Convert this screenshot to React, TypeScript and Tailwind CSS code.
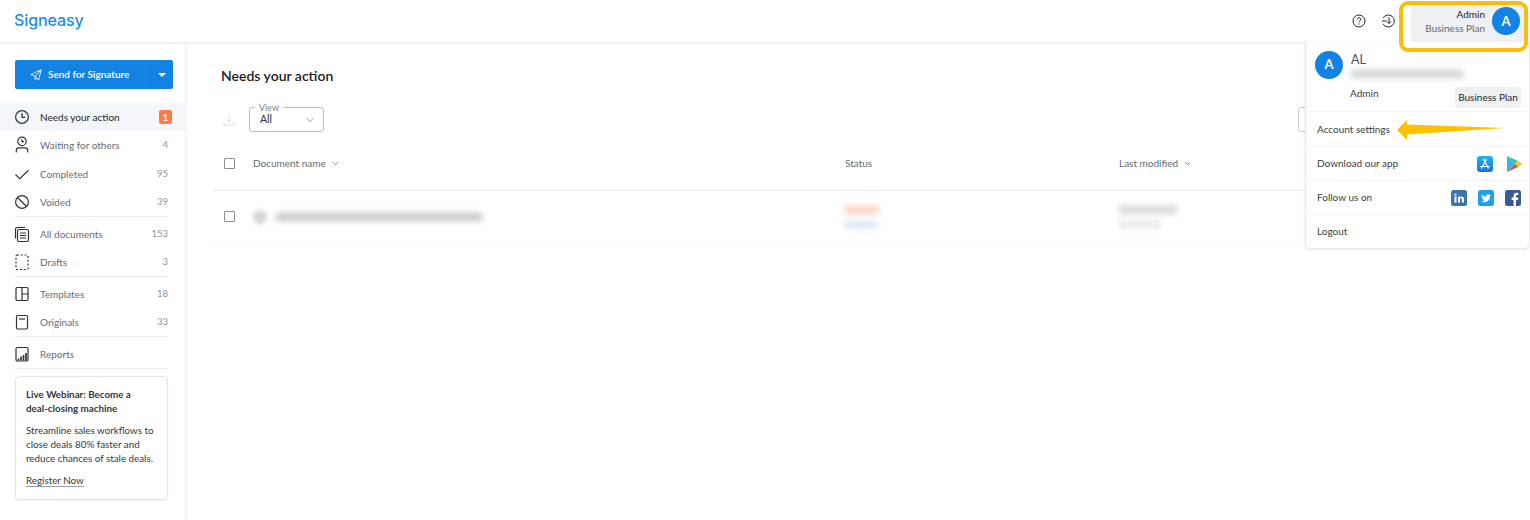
import { ChevronDown, Download } from "lucide-react";
import type { ReactNode } from "react";

const stroke = { fill: "none", stroke: "#2f3437", strokeWidth: 1.2 };

const icons: Record<string, ReactNode> = {
  clock: (
    <>
      <circle cx="10" cy="10" r="6.4" {...stroke} />
      <path d="M10 6v4.400h3.400" {...stroke} />
    </>
  ),
  waiting: (
    <>
      <circle cx="10" cy="6.400" r="4.200" {...stroke} />
      <path d="M10 4.300v2.400h2M4.300 17.500v-2.200c0-1.500 1.100-2.500 2.500-2.500h6.400c1.400 0 2.500 1 2.500 2.500v2.200" {...stroke} />
    </>
  ),
  check: <path d="M3.500 10.500l4.200 4.200 8.800-8.400" {...stroke} />,
  voided: (
    <>
      <circle cx="10" cy="10" r="6.400" {...stroke} />
      <path d="M5.500 5.500l9 9" {...stroke} />
    </>
  ),
  all: (
    <>
      <path d="M3.500 14.500V5.200c0-1 .7-1.700 1.700-1.700H13" {...stroke} />
      <rect x="5.500" y="5.500" width="11" height="12" rx="1.500" {...stroke} />
      <path d="M8 9h6M8 11.500h6M8 14h6" {...stroke} />
    </>
  ),
  drafts: <rect x="4" y="3" width="12" height="14.500" rx="1" {...stroke} strokeDasharray="2 1.800" />,
  templates: (
    <>
      <rect x="4" y="3.500" width="12" height="13" rx="1.200" {...stroke} />
      <path d="M10 3.500v13M10 10h6" {...stroke} />
    </>
  ),
  originals: (
    <>
      <rect x="4.500" y="3.500" width="11" height="13.500" rx="1.200" {...stroke} />
      <path d="M7 7h6" {...stroke} />
    </>
  ),
  reports: (
    <>
      <rect x="4" y="3.500" width="12" height="13.500" rx="1.200" {...stroke} />
      <path d="M6.500 16.500v-2M9 16.500v-4M11.500 16.500v-5.500M14 16.500V9" {...stroke} strokeWidth={1.700} />
    </>
  ),
};

function NavRow({ icon, label, count, active }: { icon: string; label: string; count?: number; active?: boolean }) {
  return (
    <div className={`flex h-[28px] items-center pl-[12px] pr-[17px] text-[10px] ${active ? "bg-[#f3f6fb] text-[#22272b]" : "text-[#666d73]"}`}>
      <svg width="20" height="20" viewBox="0 0 20 20" className="shrink-0">
        {icons[icon]}
      </svg>
      <span className="ml-[8px] flex-1">{label}</span>
      {active ? (
        <span className="mr-[-4px] flex h-[14px] w-[13px] items-center justify-center rounded-[2px] bg-[#ff7a45] text-[10px] font-bold text-white">
          {count}
        </span>
      ) : (
        <span className="text-[9.500px] text-[#8f9599]">{count}</span>
      )}
    </div>
  );
}

function Sidebar() {
  return (
    <aside className="w-[187px] shrink-0 border-r-2 border-[#f3f4f5] pt-[16px]">
      <div className="mx-[15px] flex h-[29px] w-[158px] items-center rounded-[2px] bg-[#1283e4] text-white">
        <div className="flex flex-1 items-center gap-[6px] pl-[15px]">
          <svg width="12" height="12" viewBox="0 0 14 14" fill="none" stroke="white" strokeWidth="1">
            <path d="M1 6.500L13 1 10 13 6 8.500 1 6.500zM13 1L6 8.500v4l2-2" />
          </svg>
          <span className="text-[10px] font-semibold">Send for Signature</span>
        </div>
        <div className="flex h-full w-[23px] items-center justify-center border-l border-[#127fdf]">
          <span className="mt-[1px] mr-[1px] h-0 w-0 border-x-[4px] border-t-[4px] border-x-transparent border-t-white" />
        </div>
      </div>

      <nav className="mt-[14px]">
        <NavRow icon="clock" label="Needs your action" count={1} active />
        <NavRow icon="waiting" label="Waiting for others" count={4} />
        <div className="h-[1px]" />
        <NavRow icon="check" label="Completed" count={95} />
        <NavRow icon="voided" label="Voided" count={39} />
        <div className="mx-[15px] mb-[3px] w-[153px] border-b border-[#eceef0]" />
        <NavRow icon="all" label="All documents" count={153} />
        <NavRow icon="drafts" label="Drafts" count={3} />
        <div className="mx-[15px] mb-[3px] w-[153px] border-b border-[#eceef0]" />
        <NavRow icon="templates" label="Templates" count={18} />
        <NavRow icon="originals" label="Originals" count={33} />
        <div className="mx-[15px] mb-[3px] w-[153px] border-b border-[#eceef0]" />
        <NavRow icon="reports" label="Reports" />
        <div className="mx-[15px] w-[153px] border-b border-[#eceef0]" />
      </nav>

      <div className="ml-[15px] mt-[7px] h-[124px] w-[153px] whitespace-nowrap rounded-[4px] border border-[#e2e4e6] px-[10px] pt-[10px] text-[9.800px] leading-[14px] text-[#33383c] shadow-[0_1px_2px_rgba(0,0,0,0.06)]">
        <p className="font-bold">
          Live Webinar: Become a
          <br />
          deal-closing machine
        </p>
        <p className="mt-[8px]">
          Streamline sales workflows to
          <br />
          close deals 80% faster and
          <br />
          reduce chances of stale deals.
        </p>
        <span className="mt-[9px] inline-block border-b border-[#9aa0a5] leading-[12px]">Register Now</span>
      </div>
    </aside>
  );
}

function Checkbox() {
  return <span className="block h-[11px] w-[11px] rounded-[1px] border border-[#888e93]" />;
}

function Main() {
  return (
    <main className="flex-1 pl-[26px] pt-[22px]">
      <h1 className="ml-[8px] text-[14px] font-semibold leading-[20px] text-[#1c2023]">Needs your action</h1>

      <div className="mt-[21px] flex items-center justify-between">
        <div className="flex items-center">
          <Download size={14} strokeWidth={1} className="ml-[9px] mt-[1px] text-[#c9cdd0]" />
          <div className="relative ml-[13px] flex h-[25px] w-[75px] items-center justify-between rounded-[3px] border border-[#b9bec2] pl-[10px] pr-[7px] text-[10.500px] text-[#2c3135]">
            <span className="absolute left-[5px] top-[-6px] bg-white px-[4px] text-[9px] leading-[11px] text-[#7a8086]">View</span>
            <span className="mt-[1px]">All</span>
            <ChevronDown size={12} strokeWidth={1.200} className="text-[#3f4549]" />
          </div>
        </div>
        <div className="h-[25px] w-[232px] rounded-[3px] border border-[#c9cdd0]" />
      </div>

      <div className="mt-[19px] grid h-[40px] grid-cols-[40px_592px_274px_1fr] items-center border-b border-[#e6e8ea] pb-[15px] text-[10px] text-[#636a70]">
        <span className="pl-[11px]"><Checkbox /></span>
        <span className="flex items-center gap-[5px]">
          Document name <ChevronDown size={9} />
        </span>
        <span>Status</span>
        <span className="flex items-center gap-[5px]">
          Last modified <ChevronDown size={9} />
        </span>
      </div>

      <div className="grid h-[52px] grid-cols-[40px_592px_274px_1fr] items-center border-b border-[#f8f8f9]">
        <span className="pl-[11px]"><Checkbox /></span>
        <div className="flex items-center gap-[9px]">
          <span className="h-[14px] w-[14px] rounded-full bg-[#d4d6d8] blur-[2px]" />
          <span className="h-[8px] w-[206px] bg-[#c4c6c8] blur-[3px]" />
        </div>
        <div className="flex flex-col gap-[7px]">
          <span className="h-[8px] w-[34px] bg-[#ffcfbd] blur-[3px]" />
          <span className="h-[7px] w-[32px] bg-[#d4e6f4] blur-[3px]" />
        </div>
        <div className="flex flex-col gap-[7px]">
          <span className="h-[8px] w-[58px] bg-[#d3d5d7] blur-[3px]" />
          <span className="h-[7px] w-[42px] bg-[#e6e7e9] blur-[3px]" />
        </div>
      </div>
    </main>
  );
}

function MenuRow({ children, h }: { children: ReactNode; h: string }) {
  return <div className={`flex items-center justify-between border-b border-[#f3f4f5] px-[11px] ${h}`}>{children}</div>;
}

function AccountMenu() {
  return (
    <div className="absolute right-0 top-[42px] z-10 h-[207px] w-[225px] rounded-b-[5px] border-x border-b border-[#e4e6e8] bg-white text-[10px] text-[#3b4044] shadow-[0_1px_3px_rgba(0,0,0,0.08)]">
      <div className="relative h-[70px] border-b border-[#f3f4f5]">
        <span className="absolute left-[9px] top-[9px] flex h-[28px] w-[28px] items-center justify-center rounded-full bg-[#1283e4] text-[13px] font-bold text-white">A</span>
        <span className="absolute left-[45px] top-[10px] text-[12.500px] leading-[16px] text-[#4a4f53]">AL</span>
        <span className="absolute left-[45px] top-[28px] h-[8px] w-[112px] bg-[#cfd1d3] blur-[3px]" />
        <span className="absolute left-[44px] top-[45px] leading-[13px]">Admin</span>
        <span className="absolute right-[8px] top-[45px] flex h-[21px] w-[66px] items-center justify-center rounded-[2px] bg-[#eef0f2] text-[#24282b]">Business Plan</span>
      </div>
      <MenuRow h="h-[35px]">
        <span>Account settings</span>
      </MenuRow>
      <MenuRow h="h-[34px]">
        <span>Download our app</span>
        <span className="flex items-center gap-[13px]">
          <svg width="16" height="16" viewBox="0 0 16 16">
            <defs>
              <linearGradient id="store" x1="0" y1="0" x2="0" y2="1">
                <stop offset="0" stopColor="#1fb6f6" />
                <stop offset="1" stopColor="#1670e6" />
              </linearGradient>
            </defs>
            <rect width="16" height="16" rx="3" fill="url(#store)" />
            <path d="M9.500 3L4.500 12.500M6.500 3l5 9.500M2.800 10.500h10.400" fill="none" stroke="white" strokeWidth="1.200" />
          </svg>
          <svg width="17" height="18" viewBox="0 0 17 18" className="mr-[-5px]">
            <path d="M1 1l8 8-8 8z" fill="#2fb5f0" />
            <path d="M1 1l11 5-3 3z" fill="#37c978" />
            <path d="M12 6l4.500 3L12 12 9 9z" fill="#f7c52a" />
            <path d="M1 17l11-5-3-3z" fill="#e8434f" />
          </svg>
        </span>
      </MenuRow>
      <MenuRow h="h-[34px]">
        <span>Follow us on</span>
        <span className="mr-[-3px] flex items-center gap-[11px]">
          <svg width="16" height="16" viewBox="0 0 16 16">
            <rect width="16" height="16" rx="2.500" fill="#3b74ae" />
            <path d="M3.500 6.500h2v6h-2zM3.500 3.700h2v1.800h-2zM7 6.500h1.900v.9c.8-1.400 4-1.500 4 1.500v3.600h-2V9.400c0-1.500-1.900-1.300-1.900 0v3.100H7z" fill="white" />
          </svg>
          <svg width="16" height="16" viewBox="0 0 16 16">
            <rect width="16" height="16" rx="2.500" fill="#1da1ea" />
            <path d="M13 5.200c-.4.200-.8.300-1.200.3.400-.3.700-.6.900-1.100-.4.200-.8.400-1.300.5-1.300-1.400-3.500-.2-3.100 1.600C6.500 6.400 5 5.600 4 4.400c-.6 1-.3 2.200.6 2.800-.3 0-.6-.1-.9-.2 0 1 .7 1.900 1.700 2.100-.3.100-.6.100-.9 0 .3.800 1 1.400 1.900 1.400-.9.700-2 1-3.100.9 3.900 2.400 8.900-.2 8.800-5.300.4-.2.700-.6.900-.9z" fill="white" />
          </svg>
          <svg width="16" height="16" viewBox="0 0 16 16">
            <rect width="16" height="16" rx="2.500" fill="#3b5a9a" />
            <path d="M11 16V10h2l.3-2.400H11V6.200c0-.7.200-1.200 1.200-1.200h1.200V2.900c-1.900-.3-4.800-.4-4.800 3v1.700h-2V10h2v6z" fill="white" />
          </svg>
        </span>
      </MenuRow>
      <div className="flex h-[33px] items-center px-[11px]">Logout</div>

      {/* annotation arrow */}
      <svg width="110" height="20" viewBox="0 0 110 20" className="absolute left-[91px] top-[78px]">
        <path d="M0 10L10 0v4.500l98 3.500-98 6.500V20z" fill="#fcc200" />
      </svg>
    </div>
  );
}

function Header() {
  return (
    <header className="flex h-[44px] shrink-0 items-center justify-between border-b-2 border-[#f1f2f3] pl-[14px]">
      <span className="mb-[2px] font-['Inter',sans-serif] text-[16px] font-medium tracking-[-0.1px] text-[#1a8cec]">Signeasy</span>
      <div className="flex h-full items-start">
        <svg width="14" height="14" viewBox="0 0 14 14" fill="none" stroke="#24282b" strokeWidth="1" className="mr-[15px] mt-[14px]">
          <circle cx="7" cy="7" r="6" />
          <path d="M5.200 5.400c0-2.300 3.700-2.300 3.700-.1 0 1.500-1.900 1.400-1.900 3M7 9.500v1" />
        </svg>
        <svg width="15" height="14" viewBox="0 0 15 14" fill="none" stroke="#24282b" strokeWidth="1" className="mr-[15px] mt-[14px]">
          <path d="M2 4.200A6 6 0 1 1 2 9.800" />
          <path d="M1 7h4.500M8 3.500v6M6 7.500l2 2 2-2" />
        </svg>
        <div className="mt-[4px] flex h-[38px] w-[114px] items-start justify-end bg-[#eef0f3] pr-[5px] pt-[3px] text-[10px] leading-[14px]">
          <div className="mr-[7px] text-right">
            <p className="text-[#1f2326]">Admin</p>
            <p className="text-[#62696f]">Business Plan</p>
          </div>
          <span className="flex h-[28px] w-[28px] items-center justify-center rounded-full bg-[#1283e4] text-[13px] font-bold text-white">A</span>
        </div>
        <div className="w-[5px]" />
      </div>
    </header>
  );
}

export default function App() {
  return (
    <div className="relative flex h-[520px] w-[1530px] flex-col overflow-hidden bg-white font-['Lato',sans-serif]">
      <Header />
      <div className="flex min-h-0 flex-1">
        <Sidebar />
        <Main />
      </div>
      <AccountMenu />
      {/* annotation highlight */}
      <div className="absolute left-[1399px] top-[1px] z-20 h-[51px] w-[129px] rounded-[9px] border-4 border-[#fcbd0a]" />
    </div>
  );
}
